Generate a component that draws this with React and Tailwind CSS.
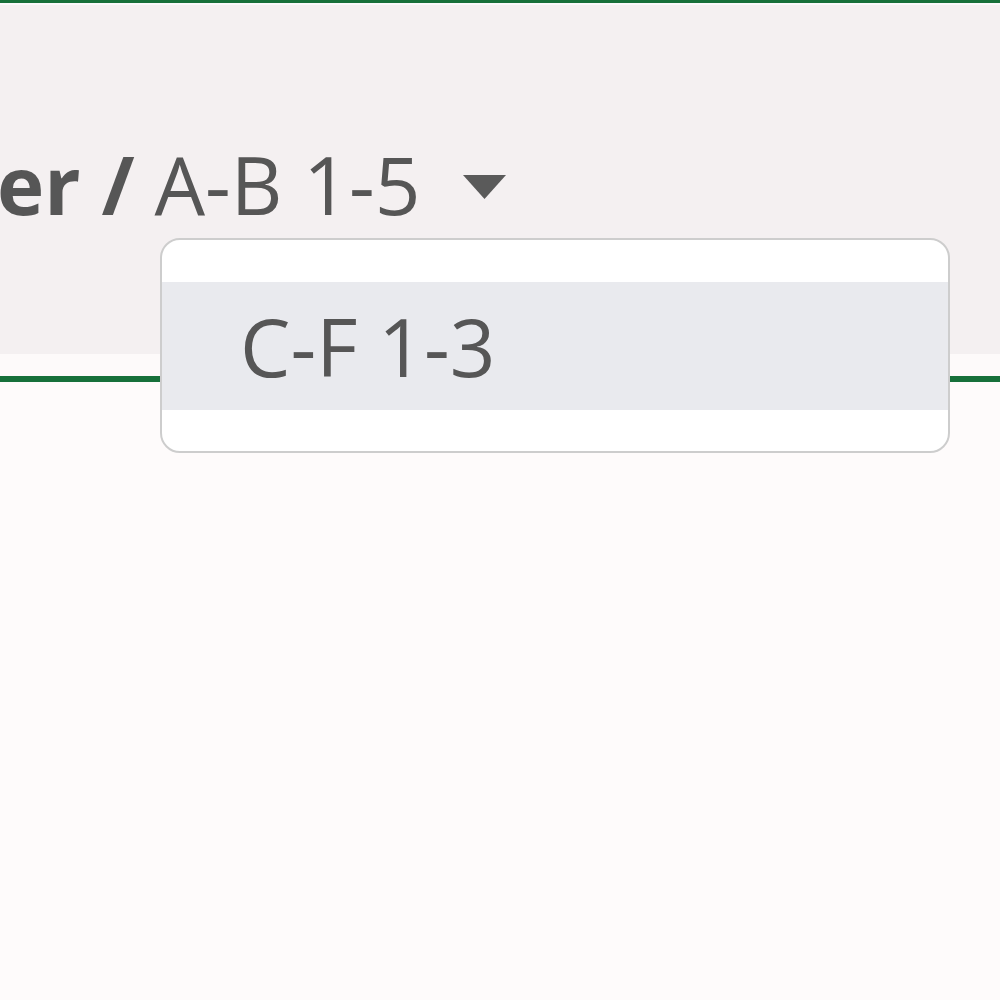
export default function App() {
  return (
    <div className="relative w-[1000px] h-[1000px] overflow-hidden bg-[#fefbfb]" style={{ fontFamily: '"Open Sans", sans-serif' }}>
      <div className="h-[3px] bg-[#17703a]" />
      <div className="h-[2px] bg-[#fbf9fb]" />
      <div className="h-[349px] bg-[#f4f0f1] pt-[131px]">
        <div className="flex items-center whitespace-nowrap text-[80px] leading-[96px] text-[#565656] ml-[-3px]">
          <span className="font-bold">er /</span>
          <span className="ml-[20px]">A-B 1-5</span>
          <svg className="ml-[43px] mt-[6px]" width="43" height="24" viewBox="0 0 43 24">
            <polygon points="0,0 43,0 21.5,24" fill="#5a5a5a" />
          </svg>
        </div>
      </div>
      <div className="h-[22px] bg-[#fdfafa]" />
      <div className="h-[6px] bg-[#17703a]" />
      <div className="absolute left-[160px] top-[238px] w-[790px] h-[215px] rounded-[20px] border-2 border-[#cdcdcd] bg-white py-[42px]">
        <div className="h-[128px] bg-[#e9eaee] flex items-center pl-[78px] text-[80px] leading-[96px] text-[#565656]">
          C-F 1-3
        </div>
      </div>
    </div>
  );
}
